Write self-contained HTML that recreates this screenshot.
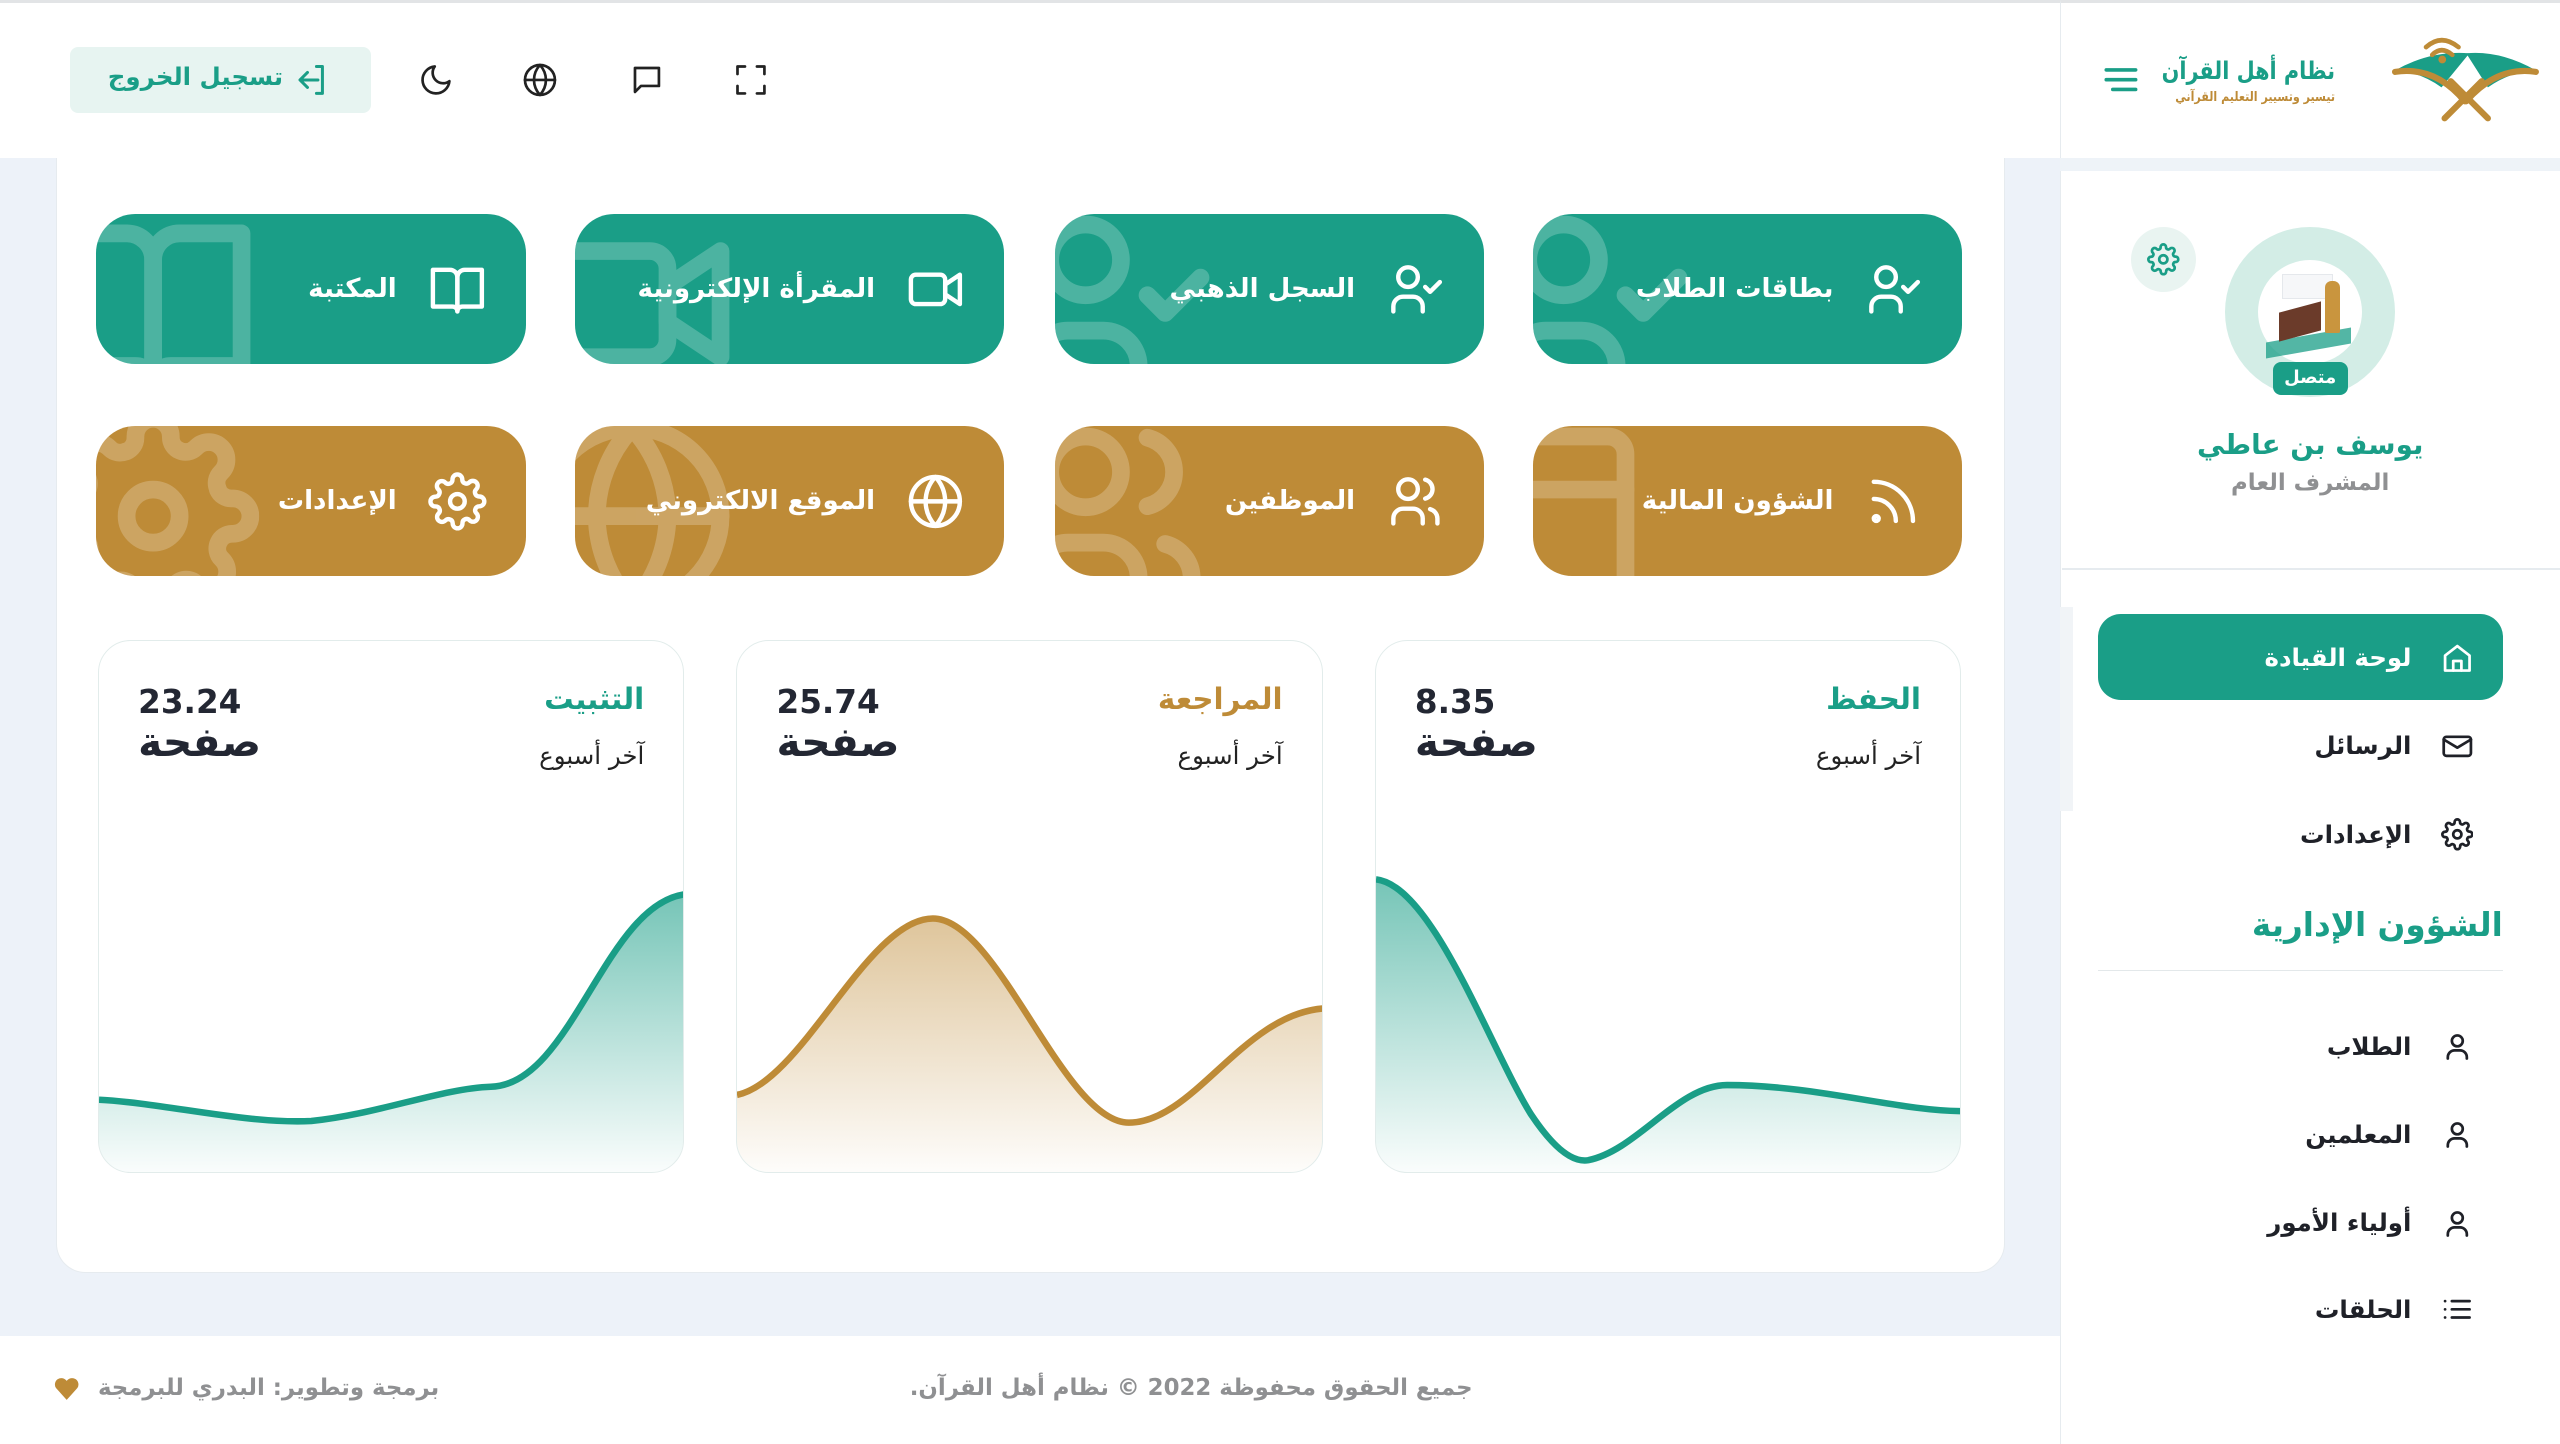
<!DOCTYPE html>
<html lang="ar"><head><meta charset="utf-8">
<style>
html,body{margin:0;padding:0;width:2560px;height:1444px;overflow:hidden;background:#fff}
#z{zoom:1.63265;width:1568px;height:885px;position:relative;overflow:hidden;font-family:"DejaVu Sans",sans-serif;background:#edf2f9}
.a{position:absolute}
.ic{fill:none;stroke-linecap:round;stroke-linejoin:round}
.btn{position:absolute;width:263px;height:92px;border-radius:24px;overflow:hidden;color:#fff}
.btn .t{position:absolute;right:79px;top:0;line-height:92px;font-size:16px;font-weight:bold;white-space:nowrap;direction:rtl}
.btn .i{position:absolute;right:24px;top:28px;width:36px;height:36px}
.btn .bg{position:absolute;left:-30px;top:-10px;width:130px;height:130px;opacity:.22}
.g{background:#1a9e87}.o{background:#be8b37}
.card{position:absolute;top:392px;width:358px;height:325px;border:1px solid #e2eceb;border-radius:20px;background:#fff;overflow:hidden}
.card .ttl{position:absolute;right:24px;top:25px;font-size:18px;font-weight:bold;direction:rtl}
.card .sub{position:absolute;right:24px;top:61px;font-size:15px;color:#222;direction:rtl}
.card .num{position:absolute;left:24px;top:26px;font-size:20px;font-weight:bold;color:#232733}
.card .pg{position:absolute;left:24px;top:47px;font-size:25px;font-weight:bold;color:#232733}
.card svg{position:absolute;left:0;top:0}
.mi{position:absolute;right:91px;font-size:15px;font-weight:bold;color:#1f2128;direction:rtl;white-space:nowrap}
.mic{position:absolute;left:1495px;width:20px;height:20px}
</style></head><body><div id="z">
<svg width="0" height="0" style="position:absolute">
<defs>
<symbol id="uchk" viewBox="0 0 24 24"><circle cx="9" cy="7" r="4"/><path d="M3 21v-2a4 4 0 0 1 4-4h4a4 4 0 0 1 4 4v2"/><polyline points="16 11 18 13 22 9"/></symbol>
<symbol id="video" viewBox="0 0 24 24"><rect x="2" y="6" width="14" height="12" rx="2"/><path d="M16 10l6-4v12l-6-4z"/></symbol>
<symbol id="book" viewBox="0 0 24 24"><path d="M2 4h7a3 3 0 0 1 3 3v14a2 2 0 0 0-2-2H2z"/><path d="M22 4h-7a3 3 0 0 0-3 3v14a2 2 0 0 1 2-2h8z"/></symbol>
<symbol id="rss" viewBox="0 0 24 24"><path d="M4 11a9 9 0 0 1 9 9"/><path d="M4 4a16 16 0 0 1 16 16"/><circle cx="5" cy="19" r="1"/></symbol>
<symbol id="users" viewBox="0 0 24 24"><circle cx="9" cy="7" r="4"/><path d="M3 21v-2a4 4 0 0 1 4-4h4a4 4 0 0 1 4 4v2"/><path d="M16 3.13a4 4 0 0 1 0 7.75"/><path d="M21 21v-2a4 4 0 0 0-3-3.85"/></symbol>
<symbol id="globe" viewBox="0 0 24 24"><circle cx="12" cy="12" r="10"/><line x1="2" y1="12" x2="22" y2="12"/><path d="M12 2a15 15 0 0 1 4 10 15 15 0 0 1-4 10 15 15 0 0 1-4-10 15 15 0 0 1 4-10z"/></symbol>
<symbol id="gear" viewBox="0 0 24 24"><circle cx="12" cy="12" r="3"/><path d="M19.4 15a1.65 1.65 0 0 0 .33 1.820l.06.06a2 2 0 0 1 0 2.83 2 2 0 0 1-2.83 0l-.06-.06a1.65 1.65 0 0 0-1.82-.33 1.65 1.65 0 0 0-1 1.51V21a2 2 0 0 1-2 2 2 2 0 0 1-2-2v-.09A1.65 1.65 0 0 0 9 19.4a1.65 1.65 0 0 0-1.82.33l-.06.06a2 2 0 0 1-2.83 0 2 2 0 0 1 0-2.83l.06-.06a1.65 1.65 0 0 0 .33-1.82 1.65 1.65 0 0 0-1.51-1H3a2 2 0 0 1-2-2 2 2 0 0 1 2-2h.09A1.65 1.65 0 0 0 4.6 9a1.65 1.65 0 0 0-.33-1.82l-.06-.06a2 2 0 0 1 0-2.83 2 2 0 0 1 2.830 0l.06.06a1.65 1.65 0 0 0 1.82.33H9a1.65 1.65 0 0 0 1-1.51V3a2 2 0 0 1 2-2 2 2 0 0 1 2 2v.09a1.65 1.65 0 0 0 1 1.51 1.65 1.65 0 0 0 1.820-.33l.06-.06a2 2 0 0 1 2.83 0 2 2 0 0 1 0 2.83l-.06.06a1.65 1.65 0 0 0-.33 1.82V9a1.65 1.65 0 0 0 1.51 1H21a2 2 0 0 1 2 2 2 2 0 0 1-2 2h-.09a1.65 1.65 0 0 0-1.51 1z"/></symbol>
<symbol id="user" viewBox="0 0 24 24"><circle cx="12" cy="8" r="4"/><path d="M5 21v-1a5 5 0 0 1 5-5h4a5 5 0 0 1 5 5v1"/></symbol>
<linearGradient id="gg" x1="0" y1="0" x2="0" y2="1"><stop offset="0" stop-color="#1a9e87" stop-opacity=".6"/><stop offset="1" stop-color="#1a9e87" stop-opacity=".02"/></linearGradient>
<linearGradient id="go" x1="0" y1="0" x2="0" y2="1"><stop offset="0" stop-color="#be8b37" stop-opacity=".5"/><stop offset="1" stop-color="#be8b37" stop-opacity=".02"/></linearGradient>
</defs></svg>

<!-- header -->
<div class="a" style="left:0;top:0;width:1568px;height:97px;background:#fff;border-top:2px solid #e2e4e6;box-sizing:border-box"></div>
<div class="a" style="left:43px;top:29px;width:184px;height:40px;background:#e7f4f1;border-radius:5px"></div>
<div class="a" style="left:66px;top:38px;font-size:15px;font-weight:bold;color:#1a9e87;direction:rtl">تسجيل الخروج</div>
<svg class="a ic" style="left:180px;top:38px" width="22" height="22" viewBox="0 0 24 24" stroke="#1a9e87" stroke-width="2"><path d="M15 3h4v18h-4"/><path d="M16 12H5"/><path d="M9 7l-5 5 5 5"/></svg>
<svg class="a ic" style="left:256px;top:38px" width="22" height="22" viewBox="0 0 24 24" stroke="#222" stroke-width="1.8"><path d="M21 12.8A9 9 0 1 1 11.2 3a7 7 0 0 0 9.8 9.8z"/></svg>
<svg class="a ic" style="left:320px;top:38px" width="22" height="22" stroke="#222" stroke-width="1.8"><use href="#globe"/></svg>
<svg class="a ic" style="left:385px;top:38px" width="22" height="22" viewBox="0 0 24 24" stroke="#222" stroke-width="1.8"><path d="M4 4h16v12H8l-4 4z"/></svg>
<svg class="a ic" style="left:449px;top:38px" width="22" height="22" viewBox="0 0 24 24" stroke="#222" stroke-width="1.8"><path d="M3 8V3h5M16 3h5v5M21 16v5h-5M8 21H3v-5"/></svg>

<!-- sidebar -->
<div class="a" style="left:1262px;top:0;width:306px;height:885px;background:#fff;border-left:1px solid #e6ebef;border-top:2px solid #e2e4e6;box-sizing:border-box"></div>
<div class="a" style="left:1262px;top:97px;width:306px;height:8px;background:#eef3f8"></div>
<div class="a" style="left:1262px;top:372px;width:8px;height:125px;background:#f1f4f7"></div>
<svg class="a" style="left:1288px;top:40px" width="22" height="18" viewBox="0 0 22 18" stroke="#1a9e87" stroke-width="2.2" stroke-linecap="round"><path d="M2 3h18M2 9h18M6 15h14"/></svg>
<div class="a" style="right:138px;top:34px;font-size:15px;font-weight:bold;color:#1a9e87;direction:rtl;white-space:nowrap;transform:scaleX(.85);transform-origin:right center">نظام أهل القرآن</div>
<div class="a" style="right:138px;top:55px;font-size:8px;font-weight:bold;color:#be8b37;direction:rtl;white-space:nowrap;transform:scaleX(.85);transform-origin:right center">تيسير وتسيير التعليم القرآني</div>
<svg class="a" style="left:1465px;top:18px" width="90" height="62" viewBox="0 0 95 62">
<path d="M2 25 Q25 12 50 14 L32 36 Q18 26 2 25z" fill="#1a9e87"/>
<path d="M93 25 Q70 12 48 14 L62 36 Q76 26 93 25z" fill="#1a9e87"/>
<path d="M2 26 Q28 22 47 45" stroke="#be8b37" stroke-width="4" fill="none" stroke-linecap="round"/>
<path d="M93 26 Q68 22 48 45" stroke="#be8b37" stroke-width="4" fill="none" stroke-linecap="round"/>
<path d="M34 56 L58 32 M62 56 L38 32" stroke="#be8b37" stroke-width="4" stroke-linecap="round"/>
<path d="M22 8 Q32 -1 43 8 M26 13 Q32 7 39 13" stroke="#be8b37" stroke-width="3" fill="none" stroke-linecap="round" transform="translate(0,2)"/>
<circle cx="32.5" cy="18" r="2.5" fill="#be8b37"/>
</svg>
<div class="a" style="left:1305px;top:139px;width:40px;height:40px;border-radius:50%;background:#e9f4f1"></div>
<svg class="a ic" style="left:1315px;top:149px" width="20" height="20" stroke="#1a9e87" stroke-width="2"><use href="#gear"/></svg>
<div class="a" style="left:1363px;top:139px;width:104px;height:104px;border-radius:50%;background:#d3ede6"></div>
<div class="a" style="left:1383px;top:159px;width:64px;height:64px;border-radius:50%;background:#fff"></div>
<div class="a" style="left:1388px;top:205px;width:52px;height:10px;background:#1a9e87;opacity:.75;transform:skewY(-10deg)"></div>
<div class="a" style="left:1396px;top:188px;width:26px;height:18px;background:#6b3b2a;transform:skewY(-15deg)"></div>
<div class="a" style="left:1398px;top:168px;width:30px;height:14px;border:1px solid #e5e8ec;background:#f6f7f9"></div>
<div class="a" style="left:1424px;top:172px;width:9px;height:32px;background:#c9953e;border-radius:4px 4px 1px 1px"></div>
<div class="a" style="left:1392px;top:222px;width:46px;height:20px;border-radius:5px;background:#1a9e87;color:#fff;font-size:11px;font-weight:bold;text-align:center;line-height:20px">متصل</div>
<div class="a" style="left:1300px;top:262px;width:230px;text-align:center;font-size:17px;font-weight:bold;color:#1a9e87">يوسف بن عاطي</div>
<div class="a" style="left:1300px;top:288px;width:230px;text-align:center;font-size:14px;font-weight:bold;color:#8f9092">المشرف العام</div>
<div class="a" style="left:1263px;top:348px;width:305px;height:1px;background:#e6ebef"></div>
<div class="a" style="left:1285px;top:376px;width:248px;height:53px;border-radius:14px;background:#1a9e87"></div>
<div class="mi" style="top:394px;color:#fff">لوحة القيادة</div>
<svg class="mic ic" style="top:393px" viewBox="0 0 24 24" stroke="#fff" stroke-width="2"><path d="M3 10l9-7 9 7v11H3z"/><path d="M9 21v-7h6v7"/></svg>
<div class="mi" style="top:448px">الرسائل</div>
<svg class="mic ic" style="top:447px" viewBox="0 0 24 24" stroke="#1f2128" stroke-width="2"><rect x="2" y="5" width="20" height="14" rx="2"/><path d="M2 7l10 6 10-6"/></svg>
<div class="mi" style="top:502px">الإعدادات</div>
<svg class="mic ic" style="top:501px" stroke="#1f2128" stroke-width="2"><use href="#gear"/></svg>
<div class="a" style="right:35px;top:555px;font-size:20px;font-weight:bold;color:#1a9e87;direction:rtl">الشؤون الإدارية</div>
<div class="a" style="left:1285px;top:594px;width:248px;height:1px;background:#e3e8ea"></div>
<div class="mi" style="top:632px">الطلاب</div>
<svg class="mic ic" style="top:631px" stroke="#1f2128" stroke-width="2"><use href="#user"/></svg>
<div class="mi" style="top:686px">المعلمين</div>
<svg class="mic ic" style="top:685px" stroke="#1f2128" stroke-width="2"><use href="#user"/></svg>
<div class="mi" style="top:740px">أولياء الأمور</div>
<svg class="mic ic" style="top:739px" stroke="#1f2128" stroke-width="2"><use href="#user"/></svg>
<div class="mi" style="top:793px">الحلقات</div>
<svg class="mic ic" style="top:792px" viewBox="0 0 24 24" stroke="#1f2128" stroke-width="2"><path d="M8 6h13M8 12h13M8 18h13M3 6h.01M3 12h.01M3 18h.01"/></svg>

<!-- main card -->
<div class="a" style="left:34px;top:97px;width:1194px;height:683px;background:#fff;border:1px solid #e6ebef;border-top:none;border-radius:0 0 18px 18px;box-sizing:border-box"></div>

<div class="btn g" style="left:939px;top:131px"><svg class="bg ic" stroke="#fff" stroke-width="2"><use href="#uchk"/></svg><div class="t">بطاقات الطلاب</div><svg class="i ic" stroke="#fff" stroke-width="1.8"><use href="#uchk"/></svg></div>
<div class="btn g" style="left:646px;top:131px"><svg class="bg ic" stroke="#fff" stroke-width="2"><use href="#uchk"/></svg><div class="t">السجل الذهبي</div><svg class="i ic" stroke="#fff" stroke-width="1.8"><use href="#uchk"/></svg></div>
<div class="btn g" style="left:352px;top:131px"><svg class="bg ic" stroke="#fff" stroke-width="2"><use href="#video"/></svg><div class="t">المقرأة الإلكترونية</div><svg class="i ic" stroke="#fff" stroke-width="1.8"><use href="#video"/></svg></div>
<div class="btn g" style="left:59px;top:131px"><svg class="bg ic" stroke="#fff" stroke-width="2"><use href="#book"/></svg><div class="t">المكتبة</div><svg class="i ic" stroke="#fff" stroke-width="1.8"><use href="#book"/></svg></div>
<div class="btn o" style="left:939px;top:261px"><svg class="bg ic" stroke="#fff" stroke-width="2" viewBox="0 0 24 24"><rect x="0" y="3" width="16" height="20" rx="2"/><path d="M0 9h16"/></svg><div class="t">الشؤون المالية</div><svg class="i ic" stroke="#fff" stroke-width="1.8"><use href="#rss"/></svg></div>
<div class="btn o" style="left:646px;top:261px"><svg class="bg ic" stroke="#fff" stroke-width="2"><use href="#users"/></svg><div class="t">الموظفين</div><svg class="i ic" stroke="#fff" stroke-width="1.8"><use href="#users"/></svg></div>
<div class="btn o" style="left:352px;top:261px"><svg class="bg ic" stroke="#fff" stroke-width="2"><use href="#globe"/></svg><div class="t">الموقع الالكتروني</div><svg class="i ic" stroke="#fff" stroke-width="1.8"><use href="#globe"/></svg></div>
<div class="btn o" style="left:59px;top:261px"><svg class="bg ic" stroke="#fff" stroke-width="2"><use href="#gear"/></svg><div class="t">الإعدادات</div><svg class="i ic" stroke="#fff" stroke-width="1.8"><use href="#gear"/></svg></div>

<!-- charts -->
<div class="card" style="left:842px">
<svg width="360" height="326" viewBox="0 0 360 326"><path d="M0,146 C35,150 70,250 95,290 C105,305 118,320 130,318 C160,312 185,272 215,272 C270,272 320,288 360,288 L360,326 L0,326Z" fill="url(#gg)"/><path d="M0,146 C35,150 70,250 95,290 C105,305 118,320 130,318 C160,312 185,272 215,272 C270,272 320,288 360,288" stroke="#1a9e87" stroke-width="4" fill="none"/></svg>
<div class="ttl" style="color:#1a9e87">الحفظ</div><div class="sub">آخر أسبوع</div><div class="num">8.35</div><div class="pg">صفحة</div></div>
<div class="card" style="left:451px">
<svg width="360" height="326" viewBox="0 0 360 326"><path d="M0,278 C40,270 80,170 120,170 C160,170 200,295 240,295 C280,295 310,228 360,225 L360,326 L0,326Z" fill="url(#go)"/><path d="M0,278 C40,270 80,170 120,170 C160,170 200,295 240,295 C280,295 310,228 360,225" stroke="#be8b37" stroke-width="4" fill="none"/></svg>
<div class="ttl" style="color:#be8b37">المراجعة</div><div class="sub">آخر أسبوع</div><div class="num">25.74</div><div class="pg">صفحة</div></div>
<div class="card" style="left:60px">
<svg width="360" height="326" viewBox="0 0 360 326"><path d="M0,281 C40,283 90,296 130,294 C170,290 210,274 240,273 C290,272 310,160 360,155 L360,326 L0,326Z" fill="url(#gg)"/><path d="M0,281 C40,283 90,296 130,294 C170,290 210,274 240,273 C290,272 310,160 360,155" stroke="#1a9e87" stroke-width="4" fill="none"/></svg>
<div class="ttl" style="color:#1a9e87">التثبيت</div><div class="sub">آخر أسبوع</div><div class="num">23.24</div><div class="pg">صفحة</div></div>

<!-- footer -->
<div class="a" style="left:0;top:818px;width:1262px;height:67px;background:#fff"></div>
<div class="a" style="right:666px;top:842px;text-align:right;font-size:14px;font-weight:bold;color:#8f9092;direction:rtl;white-space:nowrap">جميع الحقوق محفوظة 2022 © نظام أهل القرآن.</div>
<div class="a" style="left:60px;top:842px;font-size:14px;font-weight:bold;color:#8f9092;direction:rtl;white-space:nowrap">برمجة وتطوير: البدري للبرمجة</div>
<svg class="a" style="left:32px;top:842px" width="18" height="16" viewBox="0 0 24 22"><path d="M12 21L3 11a5 5 0 0 1 9-6 5 5 0 0 1 9 6z" fill="#be8b37"/></svg>
</div></body></html>
